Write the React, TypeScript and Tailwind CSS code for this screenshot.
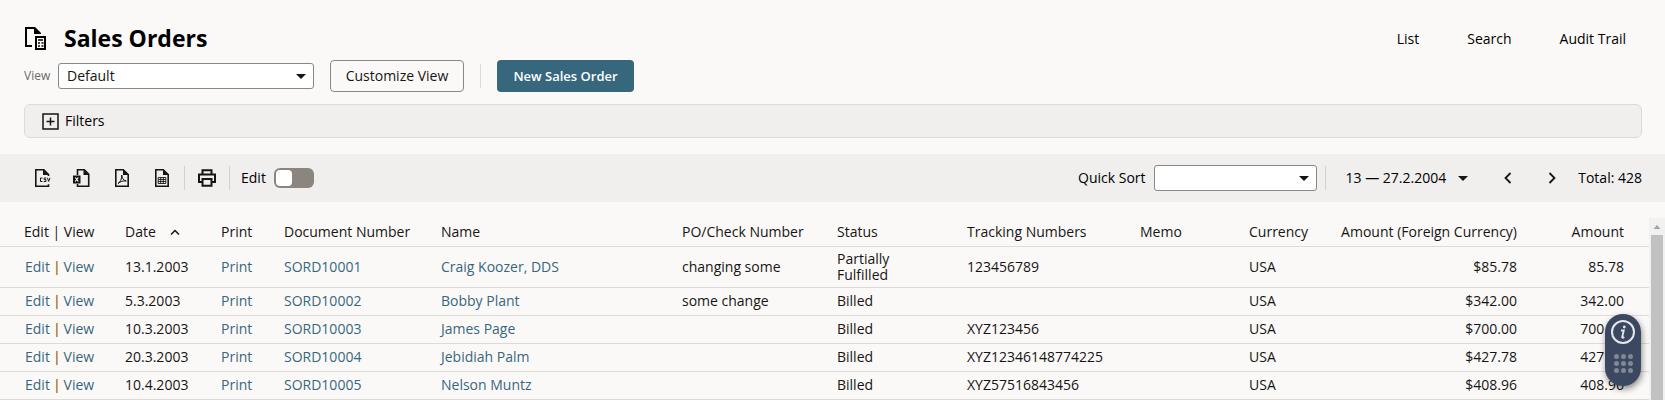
import { useState } from 'react';
import type { ReactNode } from 'react';

type Order = {
  date: string;
  number: string;
  name: string;
  po?: string;
  status: string;
  tracking?: string;
  currency: string;
  foreign: string;
  amount: string;
};

const orders: Order[] = [
  { date: '13.1.2003', number: 'SORD10001', name: 'Craig Koozer, DDS', po: 'changing some', status: 'Partially Fulfilled', tracking: '123456789', currency: 'USA', foreign: '$85.78', amount: '85.78' },
  { date: '5.3.2003', number: 'SORD10002', name: 'Bobby Plant', po: 'some change', status: 'Billed', currency: 'USA', foreign: '$342.00', amount: '342.00' },
  { date: '10.3.2003', number: 'SORD10003', name: 'James Page', status: 'Billed', tracking: 'XYZ123456', currency: 'USA', foreign: '$700.00', amount: '700.00' },
  { date: '20.3.2003', number: 'SORD10004', name: 'Jebidiah Palm', status: 'Billed', tracking: 'XYZ12346148774225', currency: 'USA', foreign: '$427.78', amount: '427.78' },
  { date: '10.4.2003', number: 'SORD10005', name: 'Nelson Muntz', status: 'Billed', tracking: 'XYZ57516843456', currency: 'USA', foreign: '$408.96', amount: '408.96' },
];

function Caret({ className = '' }: { className?: string }) {
  return (
    <svg viewBox="0 0 10 5" className={`h-[5px] w-[10px] ${className}`} fill="#161513">
      <path d="M0 0h10L5 5z" />
    </svg>
  );
}

function Divider() {
  return <span className="h-6 w-px shrink-0 bg-[#d3d1ce]" />;
}

function ToolButton({ label, children }: { label: string; children: ReactNode }) {
  return (
    <button title={label} aria-label={label} className="flex h-6 w-10 items-center justify-center">
      <svg viewBox="0 0 24 24" className="h-6 w-6" fill="none" stroke="#161513" strokeWidth="1.6">
        {children}
      </svg>
    </button>
  );
}

function OrdersIcon() {
  return (
    <svg viewBox="0 0 22 24" className="h-6 w-[22px]" fill="none" stroke="#000" strokeWidth="2">
      <path d="M8 20H2V2h8l5 5" />
      <path d="M10 1h1l6 6v1h-7z" fill="#000" stroke="none" />
      <path d="M12 11h9v12h-9z" />
      <path d="M14 14h5M14 17h2M17.500 17h2M14 20h2M17.500 20h2" strokeWidth="1.600" />
    </svg>
  );
}

function Toolbar() {
  const [editing, setEditing] = useState(false);

  return (
    <div className="mt-4 flex h-12 shrink-0 items-center justify-between bg-[#f0efed] pr-[23px] pl-[22px] font-medium text-black">
      <div className="flex items-center">
        <ToolButton label="Export CSV">
          <path d="M18.500 10V8.500L13.800 3.800H5.800v16.400h12.700v-2" />
          <path d="M13 3.500v5.500h5.800z" fill="#161513" stroke="none" />
          <path d="M12.500 12h-2v3.500h2M16.200 12h-2v1.700h1.800v1.800h-2.200M17.400 11.800l1.300 3.600 1.300-3.600" strokeWidth="1" />
        </ToolButton>
        <ToolButton label="Export Excel">
          <path d="M7.500 9V3.800h6.800L18.700 8v12.200H7.500V18" />
          <path d="M13.500 3.500V9H19z" fill="#161513" stroke="none" />
          <path d="M3 9.500h7.500v8H3z" fill="#161513" stroke="none" />
          <path d="M5.300 11.500l3 4M8.300 11.500l-3 4" stroke="#fff" strokeWidth="1.200" />
        </ToolButton>
        <ToolButton label="Export PDF">
          <path d="M5.800 3.800h7.400L18.200 8.500v11.700H5.800z" />
          <path d="M13 3.500v5.500h5.500z" fill="#161513" stroke="none" />
          <path d="M8 17.500c2-1 4-4.500 3.800-8.500 0 3 1.700 5.500 4.500 6-3-.5-6 .5-8.300 2.500z" strokeWidth="1" />
        </ToolButton>
        <ToolButton label="Export Table">
          <path d="M5.800 3.800h7.400L18.200 8.500v11.700H5.800z" />
          <path d="M13 3.500v5.500h5.500z" fill="#161513" stroke="none" />
          <path d="M8.200 11.500h7.600v6H8.200zM8.200 13.500h7.600M8.200 15.500h7.600M10.700 11.500v6M13.300 11.500v6" strokeWidth="0.900" />
        </ToolButton>
        <span className="w-0.5" />
        <Divider />
        <span className="w-0.5" />
        <ToolButton label="Print">
          <path d="M7.500 8V4.200h9V8M7.500 16H4V8.500h16V16h-3.500M7.500 13h9v6.800h-9z" strokeWidth="2" />
        </ToolButton>
        <span className="w-0.5" />
        <Divider />
        <label className="ml-[11px] flex items-center gap-2">
          Edit
          <input
            type="checkbox"
            role="switch"
            checked={editing}
            onChange={() => setEditing(!editing)}
            className="peer sr-only"
          />
          <span className="flex h-5 w-10 rounded-md bg-[#8b8580] p-0.5 peer-checked:justify-end">
            <span className="h-4 w-4 rounded-[4px] bg-white" />
          </span>
        </label>
      </div>

      <div className="flex items-center">
        <label htmlFor="quick-sort" className="mr-2">Quick Sort</label>
        <div className="relative mr-2">
          <select id="quick-sort" className="block h-[26px] w-[163px] appearance-none rounded-[3px] border border-[#8b8782] bg-white px-2">
            <option></option>
          </select>
          <Caret className="pointer-events-none absolute top-[11px] right-2" />
        </div>
        <Divider />
        <button className="ml-5 flex items-center gap-3">
          13 — 27.2.2004
          <Caret />
        </button>
        <button aria-label="Previous page" className="ml-7 flex w-6 justify-center">
          <svg viewBox="0 0 8 12" className="h-3 w-2" fill="none" stroke="#161513" strokeWidth="1.800">
            <path d="M6.500 1L1.500 6l5 5" />
          </svg>
        </button>
        <button aria-label="Next page" className="ml-5 flex w-6 justify-center">
          <svg viewBox="0 0 8 12" className="h-3 w-2" fill="none" stroke="#161513" strokeWidth="1.800">
            <path d="M1.500 1l5 5-5 5" />
          </svg>
        </button>
        <span className="ml-3.5">Total: 428</span>
      </div>
    </div>
  );
}

function OrdersTable() {
  return (
    <table className="w-full table-fixed border-collapse text-left">
      <colgroup>
        <col className="w-[125px]" />
        <col className="w-[96px]" />
        <col className="w-[63px]" />
        <col className="w-[157px]" />
        <col />
        <col className="w-[155px]" />
        <col className="w-[130px]" />
        <col className="w-[173px]" />
        <col className="w-[109px]" />
        <col className="w-[80px]" />
        <col className="w-[188px]" />
        <col className="w-[132px]" />
      </colgroup>
      <thead>
        <tr className="h-7 border-b border-[#dddbd8] whitespace-nowrap [&>th]:font-medium">
          <th className="pl-6">Edit | View</th>
          <th>
            <span className="flex items-center gap-3.5">
              Date
              <svg viewBox="0 0 10 6" className="h-1.5 w-2.5" fill="none" stroke="#161513" strokeWidth="1.500">
                <path d="M1 5.500l4-4 4 4" />
              </svg>
            </span>
          </th>
          <th>Print</th>
          <th>Document Number</th>
          <th>Name</th>
          <th>PO/Check Number</th>
          <th>Status</th>
          <th>Tracking Numbers</th>
          <th>Memo</th>
          <th>Currency</th>
          <th className="text-right">Amount (Foreign Currency)</th>
          <th className="pr-[25px] text-right">Amount</th>
        </tr>
      </thead>
      <tbody>
        {orders.map((order) => (
          <tr key={order.number} className="h-7 border-b border-[#dddbd8] leading-4">
            <td className="pl-[25px]">
              <a href="#edit" className="text-[#36677d]">Edit</a>
              <span className="mx-[3px] font-semibold text-[#a06a10]">|</span>
              <a href="#view" className="text-[#36677d]">View</a>
            </td>
            <td>{order.date}</td>
            <td><a href="#print" className="text-[#36677d]">Print</a></td>
            <td><a href="#order" className="text-[#36677d]">{order.number}</a></td>
            <td><a href="#customer" className="text-[#36677d]">{order.name}</a></td>
            <td>{order.po}</td>
            <td className="py-1 pr-12">{order.status}</td>
            <td>{order.tracking}</td>
            <td></td>
            <td>{order.currency}</td>
            <td className="text-right">{order.foreign}</td>
            <td className="pr-[25px] text-right">{order.amount}</td>
          </tr>
        ))}
      </tbody>
    </table>
  );
}

function HelpWidget() {
  return (
    <div className="absolute right-6 bottom-3.5 flex h-[72px] w-9 flex-col items-center gap-2.5 rounded-full bg-[#3c4860] pt-1.5 shadow-[1px_3px_6px_rgba(0,0,0,0.45)]">
      <button aria-label="Help">
        <svg viewBox="0 0 24 24" className="h-6 w-6" fill="none" stroke="#e4e7ec" strokeWidth="2">
          <circle cx="12" cy="12" r="11" />
          <path d="M10 10.500h2.800L11.200 17c-.2 1 .8 1 2 0" strokeWidth="1.800" />
          <circle cx="13.300" cy="7" r="1.400" fill="#e4e7ec" stroke="none" />
        </svg>
      </button>
      <button aria-label="Move" className="grid grid-cols-3 gap-0.5">
        {Array.from({ length: 9 }, (_, i) => (
          <span key={i} className="h-[5px] w-[5px] rounded-full bg-[#7f8799]" />
        ))}
      </button>
    </div>
  );
}

export default function App() {
  return (
    <div className="relative flex h-screen flex-col overflow-hidden bg-[#fbf9f8] font-['Open_Sans','Noto_Sans',sans-serif] text-sm text-[#161513]">
      <header className="flex items-center justify-between pt-5 pr-[39px] pl-6">
        <div className="flex items-center gap-[18px]">
          <OrdersIcon />
          <h1 className="text-[23px] leading-9 font-bold text-black">Sales Orders</h1>
        </div>
        <nav className="flex gap-12 pt-0.5 font-medium text-black">
          <a href="#list">List</a>
          <a href="#search">Search</a>
          <a href="#audit">Audit Trail</a>
        </nav>
      </header>

      <div className="mt-1 flex items-center pl-6">
        <label htmlFor="view" className="w-[34px] text-xs text-[#6b6763]">View</label>
        <div className="relative">
          <select id="view" className="block h-[26px] w-64 appearance-none rounded-[3px] border border-[#8b8782] bg-white px-2">
            <option>Default</option>
          </select>
          <Caret className="pointer-events-none absolute top-[11px] right-2" />
        </div>
        <button className="ml-4 h-8 w-[134px] rounded border border-[#8b8782] font-medium">Customize View</button>
        <span className="mx-4 h-6 w-px bg-[#dddbd8]" />
        <button className="h-8 w-[137px] rounded bg-[#36677d] text-[13px] font-semibold text-white">New Sales Order</button>
      </div>

      <div className="mt-3 mr-[23px] ml-6 shrink-0 rounded-md border border-[#dddbd8] bg-[#f0efed]">
        <button className="flex h-8 items-center gap-1.5 pl-[17px] font-medium text-black">
          <svg viewBox="0 0 17 17" className="h-[17px] w-[17px]" fill="none" stroke="#161513" strokeWidth="1.500">
            <path d="M1 1h15v15H1zM4.500 8.500h8M8.500 4.500v8" />
          </svg>
          Filters
        </button>
      </div>

      <Toolbar />

      <div className="mt-4 flex min-h-0 flex-1">
        <div className="min-w-0 flex-1 overflow-hidden">
          <OrdersTable />
        </div>
        <div className="flex w-4 shrink-0 flex-col items-center bg-[#f1f1f1]">
          <svg viewBox="0 0 16 17" className="h-[17px] w-4 shrink-0" fill="#a3a3a3">
            <path d="M4.500 11L8 7l3.500 4z" />
          </svg>
          <div className="w-3 flex-1 bg-[#c1c1c1]" />
        </div>
      </div>

      <HelpWidget />
    </div>
  );
}
